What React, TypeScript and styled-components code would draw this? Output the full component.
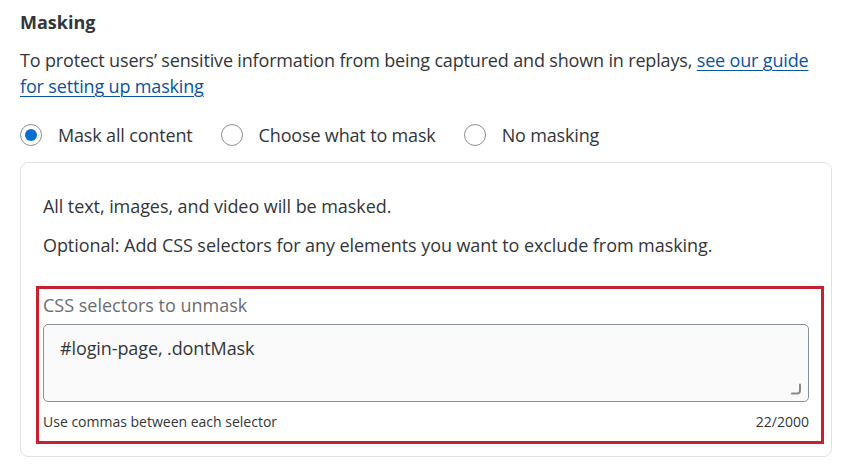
import React from "react";
import styled, { createGlobalStyle } from "styled-components";

const Global = createGlobalStyle`
  html, body { margin: 0; padding: 0; background: #ffffff; }
  body { font-family: "Open Sans", "Liberation Sans", sans-serif; color: #32363a; }
  * { box-sizing: border-box; }
`;

const Page = styled.div`
  width: 850px;
  padding: 10px 18px 0 20px;
  display: flex;
  flex-direction: column;
`;

const Title = styled.h2`
  margin: 0;
  font-size: 18px;
  font-weight: 700;
  line-height: 24px;
  color: #32363a;
`;

const Intro = styled.p`
  margin: 13px 0 0;
  font-size: 18px;
  line-height: 26px;
  letter-spacing: -0.16px;
  width: 800px;
`;

const Link = styled.a`
  color: #0854a0;
  text-decoration: underline;
  text-decoration-thickness: 1px;
  text-underline-offset: 3px;
`;

const RadioRow = styled.div`
  display: flex;
  align-items: center;
  gap: 28px;
  margin-top: 24px;
  height: 24px;
`;

const RadioItem = styled.label`
  display: flex;
  align-items: center;
  gap: 16px;
  font-size: 18px;
  line-height: 24px;
  letter-spacing: -0.16px;
`;

const RadioCircle = styled.span<{ $checked?: boolean }>`
  width: 22px;
  height: 22px;
  border-radius: 50%;
  border: 1.5px solid #89919a;
  display: flex;
  align-items: center;
  justify-content: center;
  background: #fff;
  &::after {
    content: "";
    width: 12px;
    height: 12px;
    border-radius: 50%;
    background: ${(p) => (p.$checked ? "#0a6ed1" : "transparent")};
  }
`;

const Card = styled.div`
  margin-top: 15px;
  width: 812px;
  border: 1px solid #e2e2e2;
  border-radius: 8px;
  padding: 31px 7px 12px 15px;
  display: flex;
  flex-direction: column;
`;

const CardText = styled.p`
  margin: 0 0 0 7px;
  font-size: 18px;
  line-height: 24px;
  letter-spacing: -0.07px;
  & + & { margin-top: 15px; }
`;

const Highlight = styled.div`
  margin-top: 29px;
  border: 3px solid #c8202f;
  padding: 4px 12px 9px 4px;
  display: flex;
  flex-direction: column;
`;

const FieldLabel = styled.div`
  font-size: 18px;
  line-height: 24px;
  color: #6a6d70;
`;

const TextArea = styled.div`
  position: relative;
  margin-top: 7px;
  height: 78px;
  background: #fafafa;
  border: 1px solid #89919a;
  border-radius: 5px;
  padding: 11px 16px;
  font-size: 18px;
  line-height: 24px;
  letter-spacing: -0.1px;
`;

const Grip = styled.svg`
  position: absolute;
  right: 6px;
  bottom: 6px;
`;

const Footer = styled.div`
  margin-top: 10px;
  display: flex;
  justify-content: space-between;
  font-size: 14px;
  line-height: 20px;
`;

export default function App() {
  return (
    <>
      <Global />
      <Page>
        <Title>Masking</Title>
        <Intro>
          To protect users’ sensitive information from being captured and shown in replays,{" "}
          <Link href="#">see our guide for setting up masking</Link>
        </Intro>
        <RadioRow>
          <RadioItem>
            <RadioCircle $checked />
            Mask all content
          </RadioItem>
          <RadioItem>
            <RadioCircle />
            Choose what to mask
          </RadioItem>
          <RadioItem>
            <RadioCircle />
            No masking
          </RadioItem>
        </RadioRow>
        <Card>
          <CardText>All text, images, and video will be masked.</CardText>
          <CardText>Optional: Add CSS selectors for any elements you want to exclude from masking.</CardText>
          <Highlight>
            <FieldLabel>CSS selectors to unmask</FieldLabel>
            <TextArea>
              #login-page, .dontMask
              <Grip width="12" height="12" viewBox="0 0 12 12">
                <path d="M10 1.5 V7.5 Q10 10.5 7 10.5 H2" fill="none" stroke="#8a8a8a" strokeWidth="2" strokeLinecap="round" />
              </Grip>
            </TextArea>
            <Footer>
              <span>Use commas between each selector</span>
              <span>22/2000</span>
            </Footer>
          </Highlight>
        </Card>
      </Page>
    </>
  );
}
